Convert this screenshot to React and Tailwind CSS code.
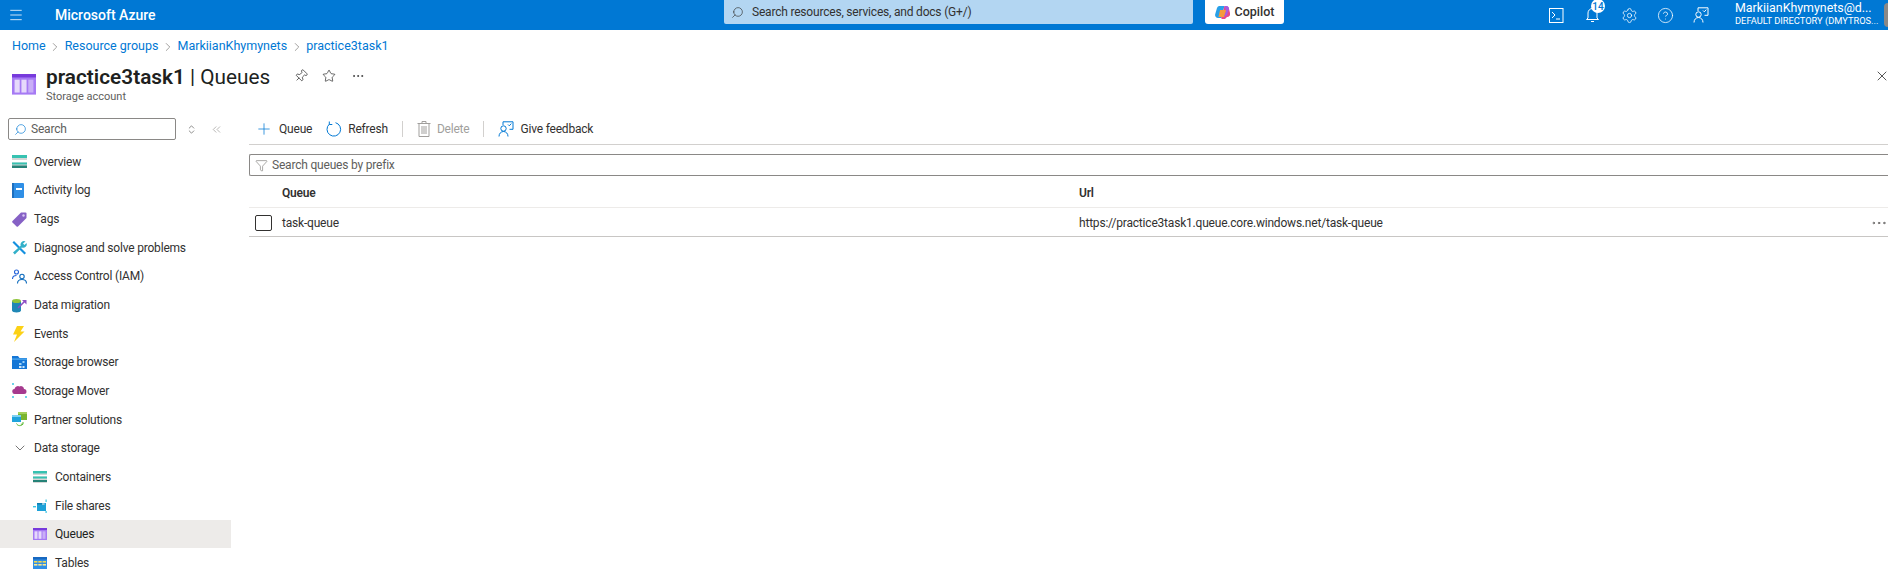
import { Menu, Search, Plus, Filter, Pin, Star, Ellipsis, X, ChevronsLeft, ChevronDown, ChevronRight, ChevronsUpDown, Settings, CircleHelp } from "lucide-react";

const font = "font-['Roboto','Noto_Sans',sans-serif]";

// Colored service icons
const IconOverview = () => (
  <svg width="15" height="15" viewBox="0 0 15 15"><rect y="1" width="15" height="13" fill="#d6d6d6" /><rect y="1" width="15" height="3" fill="#37c2b1" /><rect y="6" width="15" height="2.5" fill="#fff" /><rect y="8.5" width="15" height="2" fill="#37c2b1" /><rect y="11.5" width="15" height="2.5" fill="#258277" /></svg>
);
const IconActivity = () => (
  <svg width="13" height="15" viewBox="0 0 13 15"><rect width="12" height="15" rx="1" fill="#2f8fe6" /><rect x="0" width="2" height="15" fill="#1e6fbf" /><rect x="4" y="5" width="6" height="2" fill="#fff" /></svg>
);
const IconTags = () => (
  <svg width="15" height="15" viewBox="0 0 15 15"><path d="M9 0.5h4.5a1 1 0 0 1 1 1V6L6 14.5a1 1 0 0 1-1.4 0L0.5 10.400a1 1 0 0 1 0-1.400z" fill="#8661c5" /><circle cx="11.500" cy="3.500" r="1.200" fill="#d9c8f5" /></svg>
);
const IconDiagnose = () => (
  <svg width="15" height="15" viewBox="0 0 15 15"><path d="M2 1l12 12-1.500 1.500L0.500 2.500z" fill="#1490df" /><path d="M13.500 1.500a3.500 3.500 0 0 0-4.800 4.300L1 12.500 2.800 14.500l7-7a3.500 3.500 0 0 0 4.700-4.500L12.500 5 11 3.500z" fill="#32b0c9" /></svg>
);
const IconAccess = () => (
  <svg width="15" height="15" viewBox="0 0 15 15" fill="none" stroke="#0f6cbd" strokeWidth="1.100"><circle cx="4.500" cy="3" r="2" stroke="#2563d9" /><path d="M0.500 10c0-2.500 1.500-3.500 4-3.500" stroke="#2563d9" /><circle cx="10" cy="7.500" r="2.200" /><path d="M5.500 14.500c0-3 2-4 4.500-4s4.500 1 4.500 4" /></svg>
);
const IconMigration = () => (
  <svg width="15" height="15" viewBox="0 0 15 15"><path d="M0 3v9.500c0 1.200 2.200 2 4.500 2s4.500-.8 4.500-2V3z" fill="#1f87b5" /><ellipse cx="4.500" cy="3" rx="4.500" ry="2" fill="#8fc43a" /><path d="M6 10l6.500-6.500" stroke="#8d4fc4" strokeWidth="1.600" /><path d="M10 2h4.500v4.500z" fill="#8d4fc4" /></svg>
);
const IconEvents = () => (
  <svg width="13" height="16" viewBox="0 0 13 16"><path d="M5 0h7L8.500 5.500H12.500L2 16l3-7.500H1z" fill="#fcd116" /></svg>
);
const IconBrowser = () => (
  <svg width="15" height="13" viewBox="0 0 15 13"><path d="M0 0h6l1.500 2H15v11H0z" fill="#1576d6" /><rect y="2.500" width="15" height="1.200" fill="#54aef0" /><rect x="7" y="7" width="2.500" height="2" fill="#9fd3f7" /><rect x="10.500" y="10" width="2" height="2" fill="#cfe8fb" /><rect x="7" y="10" width="2.500" height="2" fill="#cfe8fb" /><rect x="10.500" y="5" width="2" height="2" fill="#9fd3f7" /></svg>
);
const IconMover = () => (
  <svg width="15" height="15" viewBox="0 0 15 15"><path d="M3 11a2.500 2.500 0 0 1-.5-5A3.500 3.500 0 0 1 7.500 3.500 3 3 0 0 1 12 6a2.500 2.500 0 0 1 0 5z" fill="#a63a8e" /><circle cx="1" cy="1" r="1" fill="#3cc4e0" /><circle cx="1" cy="14" r="1" fill="#3cc4e0" /><circle cx="14" cy="14" r="1" fill="#3cc4e0" /></svg>
);
const IconPartner = () => (
  <svg width="15" height="15" viewBox="0 0 15 15"><rect x="6" y="0" width="9" height="8" fill="#7ab52f" /><rect x="6" y="0" width="9" height="2" fill="#a5d15c" /><rect x="0" y="3" width="9" height="7" fill="#1fa3dc" /><rect x="0" y="3" width="9" height="2" fill="#7fd1f2" /><path d="M4.500 11.500c1 2.500 4.500 3 6.500.5M11 10v2.200H8.800" fill="none" stroke="#5bb531" strokeWidth="1" /></svg>
);
const IconContainers = () => (
  <svg width="14" height="12" viewBox="0 0 14 12"><rect width="14" height="12" fill="#d6d6d6" /><rect width="14" height="2.500" fill="#37c2b1" /><rect y="4" width="14" height="1.500" fill="#fff" /><rect y="5.500" width="14" height="2" fill="#37c2b1" /><rect y="9" width="14" height="2" fill="#258277" /></svg>
);
const IconFileShares = () => (
  <svg width="14" height="14" viewBox="0 0 14 14"><path d="M4 4h9v8H4z" fill="#1da1d8" /><path d="M4 4h6l1 1.500h-7z" fill="#0f7fb0" /><rect x="9" y="4.500" width="2.500" height="1" fill="#fff" /><rect x="0" y="7" width="3" height="1.400" fill="#3cc4e0" /><rect x="12.500" y="0.500" width="1.200" height="2.500" fill="#3cc4e0" /><rect x="12.500" y="12" width="1.200" height="2" fill="#3cc4e0" /></svg>
);
const IconQueues = ({ s = 14 }) => (
  <svg width={s} height={s * 0.86} viewBox="0 0 14 12"><rect width="14" height="12" fill="#a67af4" /><rect width="14" height="2" fill="#773adc" /><rect x="1.500" y="3.300" width="3" height="7.500" fill="#e6d9fb" /><rect x="5.500" y="3.300" width="3" height="7.500" fill="#e6d9fb" /><rect x="9.500" y="3.300" width="3" height="7.500" fill="#c9aef7" /></svg>
);
const IconTables = () => (
  <svg width="14" height="12" viewBox="0 0 14 12"><rect width="14" height="12" fill="#2f8fe6" /><rect width="14" height="2.500" fill="#1868c0" /><g fill="#f5d94e"><rect x="1" y="4" width="3.400" height="1.600" /><rect x="5.300" y="4" width="3.400" height="1.600" /><rect x="9.600" y="4" width="3.400" height="1.600" /></g><g fill="#ffe98a"><rect x="1" y="7" width="3.400" height="1.600" /><rect x="5.300" y="7" width="3.400" height="1.600" /><rect x="9.600" y="7" width="3.400" height="1.600" /></g></svg>
);
const IconFeedback = ({ color = "#fff", s = 16 }) => (
  <svg width={s} height={s} viewBox="0 0 16 16" fill="none" stroke={color} strokeWidth="1"><path d="M5 4V0.800h10v7.500H11.500" /><path d="M10 3.500l1.300 1.300 2-2.200" /><circle cx="5.500" cy="7.500" r="2.700" /><path d="M1 15.500c0-3 2-5 4.500-5s4.500 2 4.500 5" /></svg>
);
const IconCopilot = () => (
  <svg width="15" height="15" viewBox="0 0 15 15"><path d="M4 1h5.500L6 13H3a3 3 0 0 1-2.800-3.800L2 3a3 3 0 0 1 2-2z" fill="#28a0e8" /><path d="M6 13L9.500 1h1.500a3 3 0 0 1 2.800 2L15 8a3 3 0 0 1-3 4l-2 2H7z" fill="#e8488a" /><path d="M5 5h6.500L9 12H3.500z" fill="#f59a3c" /><path d="M9.500 1h2a2.500 2.500 0 0 1 2.500 3L12 10 9 12l2-6z" fill="#a55ce0" /></svg>
);
const IconShell = () => (
  <svg width="15" height="15" viewBox="0 0 15 15" fill="none" stroke="#fff" strokeWidth="1"><rect x="0.500" y="0.500" width="13.500" height="14" /><path d="M3 4l3 3-3 3M7 11h4" /></svg>
);
const IconRefresh = () => (
  <svg width="16" height="16" viewBox="0 0 16 16" fill="none" stroke="#0078d4" strokeWidth="1"><path d="M9.500 1.700A6.800 6.800 0 1 1 3.300 3.200" /><path d="M3.300 0.500v3h3" /></svg>
);
const IconTrash = () => (
  <svg width="14" height="16" viewBox="0 0 14 16" fill="none" stroke="#a19f9d" strokeWidth="1"><path d="M0.500 2.500h13M5 2.500V0.500h4v2M2 2.500v13h10v-13M5 5v8M7 5v8M9 5v8" /></svg>
);

const NAV = [
  [IconOverview, "Overview"],
  [IconActivity, "Activity log"],
  [IconTags, "Tags"],
  [IconDiagnose, "Diagnose and solve problems"],
  [IconAccess, "Access Control (IAM)"],
  [IconMigration, "Data migration"],
  [IconEvents, "Events"],
  [IconBrowser, "Storage browser"],
  [IconMover, "Storage Mover"],
  [IconPartner, "Partner solutions"],
];

const SUB = [
  [IconContainers, "Containers"],
  [IconFileShares, "File shares"],
  [IconQueues, "Queues", true],
  [IconTables, "Tables"],
];

function TopBar() {
  return (
    <header className="flex h-[30px] shrink-0 items-center bg-[#0078d4] text-white">
      <div className="flex w-[55px] pl-[8px]">
        <Menu size={16} strokeWidth={1.2} />
      </div>
      <span className="w-[669px] text-[14px] font-medium">Microsoft Azure</span>
      <div className="flex h-[24px] w-[469px] -translate-y-[3px] items-center gap-[8px] rounded-b-[2px] bg-[#b3d6f2] pl-[7px] text-[12px] tracking-[-0.2px] text-[#323130]">
        <Search size={13} strokeWidth={1.2} className="scale-x-[-1]" />
        <span>Search resources, services, and docs (G+/)</span>
      </div>
      <div className="ml-[12px] flex h-[24px] w-[79px] -translate-y-[3px] items-center justify-center gap-[5px] rounded-b-[3px] bg-white text-[12.500px] font-medium text-[#323130]">
        <IconCopilot />
        <span>Copilot</span>
      </div>
      <div className="ml-[265px] flex w-[186px] items-center">
        <div className="flex w-[36px]"><IconShell /></div>
        <div className="relative flex w-[36px]">
          <svg width="15" height="16" viewBox="0 0 15 16" fill="none" stroke="#fff" strokeWidth="1"><path d="M3 11V6a4.500 4.500 0 0 1 9 0v5l1.500 1.500h-12zM6 14.500h3" /></svg>
          <span className="absolute -top-[8px] left-[6px] flex h-[14px] w-[14px] items-center justify-center rounded-full bg-white text-[10px] font-medium text-[#0078d4]">14</span>
        </div>
        <div className="flex w-[36px]"><Settings size={17} strokeWidth={1.1} /></div>
        <div className="flex w-[36px]"><CircleHelp size={17} strokeWidth={1.1} /></div>
        <div className="flex"><IconFeedback /></div>
      </div>
      <div className="flex w-[145px] -translate-y-[1px] flex-col whitespace-nowrap leading-[13px]">
        <span className="text-[12.400px]">MarkiianKhymynets@d...</span>
        <span className="text-[9.300px]">DEFAULT DIRECTORY (DMYTROS...</span>
      </div>
      <div className="ml-auto h-[24px] w-[4px] rounded-l-full bg-[#8a8886]" />
    </header>
  );
}

function Sidebar() {
  return (
    <aside className="w-[231px] shrink-0 text-[12px] tracking-[-0.2px] text-[#323130]">
      <div className="flex h-[39.500px] items-center pl-[8px] pt-[3px]">
        <div className="flex h-[22px] w-[168px] items-center gap-[4px] rounded-[2px] border border-[#8a8886] pl-[5px] text-[#605e5c]">
          <Search size={13} strokeWidth={1.2} color="#0078d4" className="scale-x-[-1]" />
          <span>Search</span>
        </div>
        <ChevronsUpDown size={11} strokeWidth={1.2} className="ml-[10px]" color="#323130" />
        <ChevronsLeft size={13} strokeWidth={1.1} className="ml-[13px]" color="#8a8886" />
      </div>
      <nav>
        {NAV.map(([Icon, label]) => (
          <div key={label} className="flex h-[28.650px] items-center">
            <div className="flex w-[34px] justify-start pl-[12px]"><Icon /></div>
            <span>{label}</span>
          </div>
        ))}
        <div className="flex h-[28.650px] items-center">
          <div className="flex w-[34px] pl-[12px]"><ChevronDown size={16} strokeWidth={1} color="#323130" /></div>
          <span>Data storage</span>
        </div>
        {SUB.map(([Icon, label, active]) => (
          <div key={label} className={`flex h-[28.650px] items-center ${active ? "bg-[#edebe9] text-[#201f1e]" : ""}`}>
            <div className="flex w-[55px] pl-[33px]"><Icon /></div>
            <span>{label}</span>
          </div>
        ))}
      </nav>
    </aside>
  );
}

function ToolbarItem({ icon, label, disabled, className = "" }) {
  return (
    <div className={`flex items-center gap-[6px] ${disabled ? "text-[#a19f9d]" : "text-[#323130]"} ${className}`}>
      {icon}
      <span>{label}</span>
    </div>
  );
}

function Main() {
  return (
    <main className="min-w-0 flex-1 pl-[18px] text-[12px] tracking-[-0.2px] text-[#323130]">
      <div className="flex h-[37px] items-center border-b border-[#d2d0ce] pl-[6px] pt-[5px]">
        <ToolbarItem icon={<Plus size={18} strokeWidth={1} color="#0078d4" />} label="Queue" />
        <ToolbarItem icon={<IconRefresh />} label="Refresh" className="ml-[14px]" />
        <div className="mx-[14px] h-[16px] w-px bg-[#d2d0ce]" />
        <ToolbarItem icon={<IconTrash />} label="Delete" disabled />
        <div className="mx-[14px] h-[16px] w-px bg-[#d2d0ce]" />
        <ToolbarItem icon={<IconFeedback color="#0078d4" />} label="Give feedback" />
      </div>
      <div className="mt-[9px] flex h-[22px] items-center gap-[4px] rounded-l-[2px] border border-r-0 border-[#8a8886] pl-[5px] text-[#605e5c]">
        <Filter size={13} strokeWidth={1} />
        <span>Search queues by prefix</span>
      </div>
      <div className="flex h-[32px] items-center border-b border-[#edebe9] pt-[3px] font-semibold">
        <div className="w-[830px] pl-[33px]">Queue</div>
        <div>Url</div>
      </div>
      <div className="flex h-[29px] items-center border-b border-[#c8c6c4] pt-[1px]">
        <div className="w-[33px] pl-[6px]">
          <div className="h-[16px] w-[17px] rounded-[2px] border border-[#323130]" />
        </div>
        <div className="w-[797px]">task-queue</div>
        <div>https://practice3task1.queue.core.windows.net/task-queue</div>
        <Ellipsis size={18} strokeWidth={1.2} color="#605e5c" className="ml-auto" />
      </div>
    </main>
  );
}

function Crumb() {
  return <ChevronRight size={14} strokeWidth={1} color="#605e5c" className="mx-[2.500px]" />;
}

export default function App() {
  return (
    <div className={`flex h-[582px] w-[1888px] flex-col overflow-hidden bg-white ${font}`}>
      <TopBar />
      <div className="flex h-[32px] shrink-0 items-center pl-[12px] pt-[1px] text-[12.500px] text-[#0078d4]">
        <span>Home</span>
        <Crumb />
        <span>Resource groups</span>
        <Crumb />
        <span>MarkiianKhymynets</span>
        <Crumb />
        <span>practice3task1</span>
      </div>
      <div className="flex h-[46px] shrink-0 items-start">
        <div className="flex w-[46px] pl-[12px] pt-[12px]"><IconQueues s={24} /></div>
        <div className="flex flex-col">
          <h1 className="text-[20.800px] leading-[30px] text-[#201f1e]"><span className="font-semibold">practice3task1</span> | Queues</h1>
          <span className="-mt-[2px] text-[11px] leading-[14px] text-[#605e5c]">Storage account</span>
        </div>
        <Pin size={14} strokeWidth={1} className="ml-[24px] mt-[7px] rotate-45" />
        <Star size={14} strokeWidth={1} className="ml-[14px] mt-[7px]" />
        <Ellipsis size={14} strokeWidth={1} className="ml-[15px] mt-[7px]" />
        <X size={16} strokeWidth={1} className="-mr-[2px] ml-auto mt-[6px]" />
      </div>
      <div className="flex min-h-0 flex-1">
        <Sidebar />
        <Main />
      </div>
    </div>
  );
}
